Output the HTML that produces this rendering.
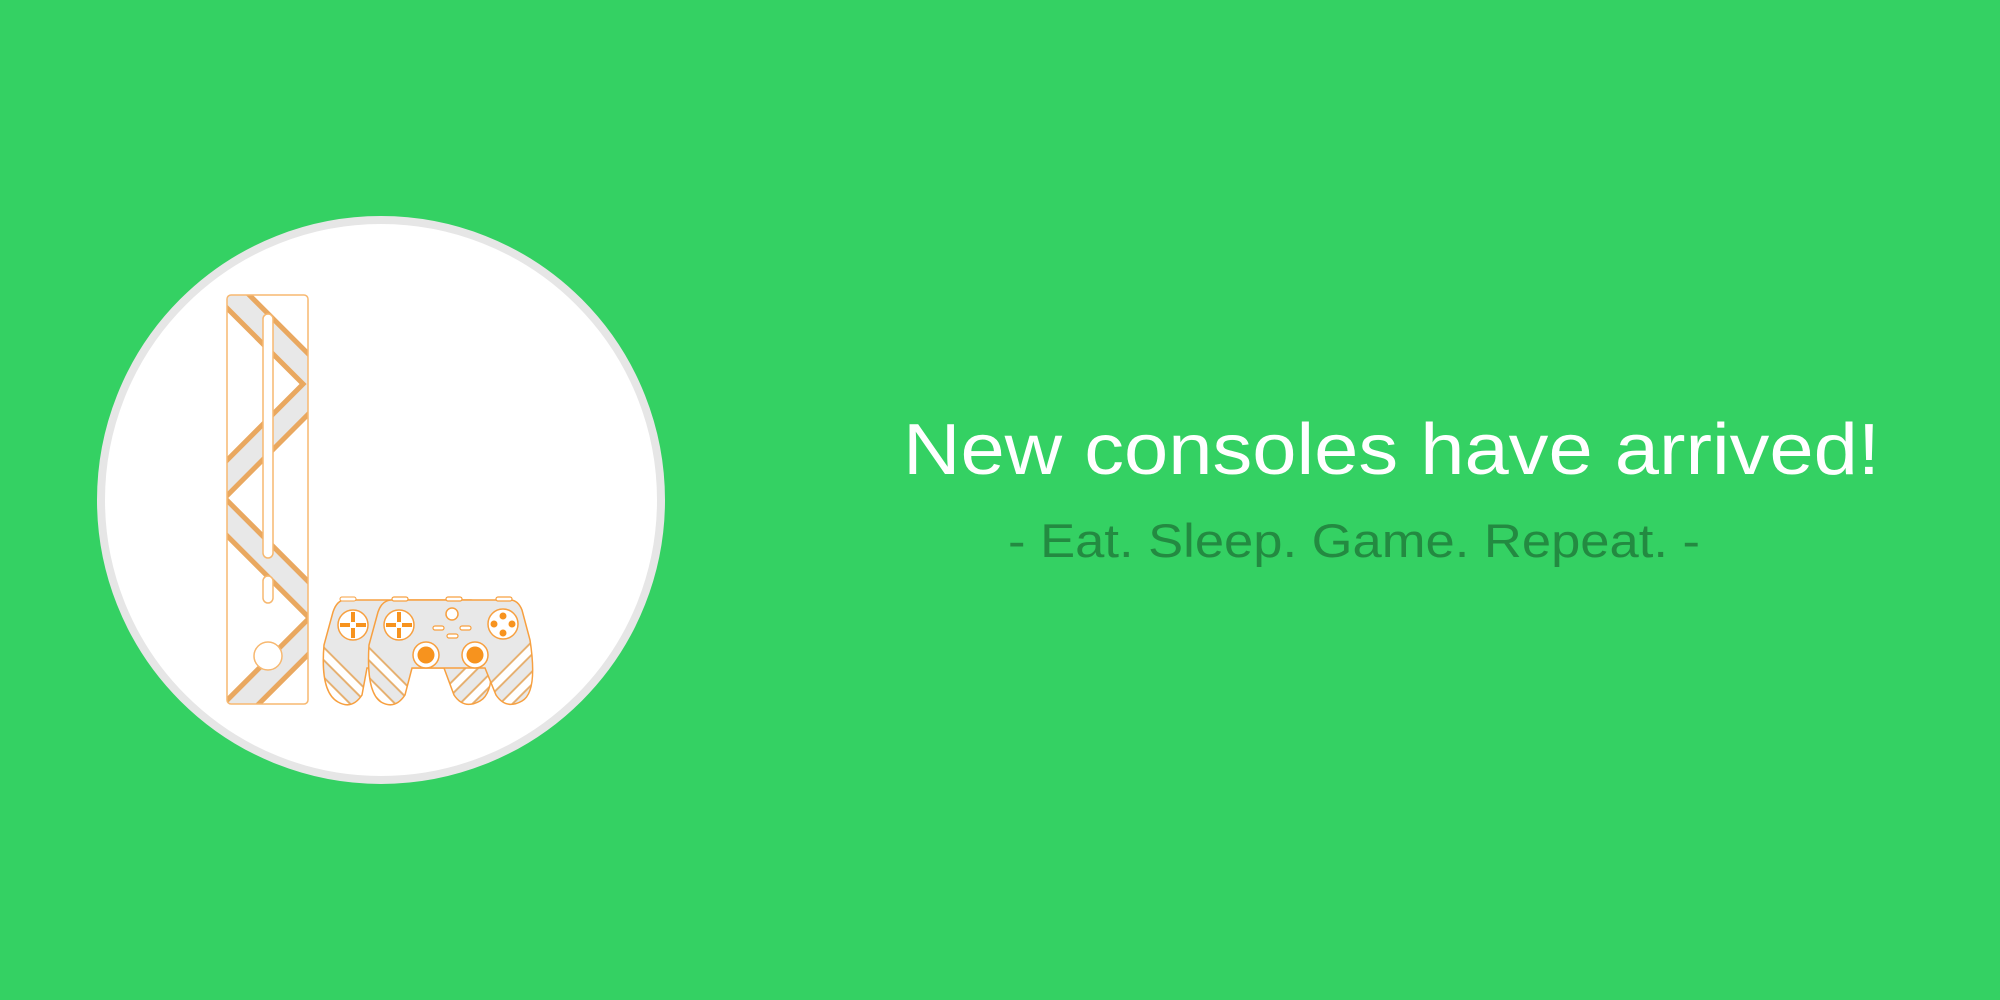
<!DOCTYPE html>
<html><head><meta charset="utf-8"><style>
html,body{margin:0;padding:0;background:#34d163;width:2000px;height:1000px;overflow:hidden}
svg{display:block}
</style></head><body>
<svg width="2000" height="1000" viewBox="0 0 2000 1000" xmlns="http://www.w3.org/2000/svg">
<rect width="2000" height="1000" fill="#34d163"/>
<circle cx="381" cy="500" r="280" fill="#fff" stroke="#e6e6e6" stroke-width="8"/>
<defs>
<clipPath id="cc"><rect x="227" y="295" width="81" height="409" rx="4"/></clipPath>
<path id="fp" d="M392 600 L510 600 Q518 600 522 610 L530 640 Q538 692 522 701 Q506 710 496 695 L485 668 L412 668 L405 695 Q395 710 381 702 Q366 692 369 645 L378 612 Q382 600 392 600 Z"/>
<path id="bp" d="M345 600 L470 600 Q478 600 482 610 L490 645 Q496 692 480 701 Q464 710 454 695 L444 668 L367 668 L362 695 Q352 710 338 702 Q320 692 324 645 L333 612 Q337 600 345 600 Z"/>
<clipPath id="fc"><use href="#fp"/></clipPath>
<clipPath id="bc"><use href="#bp"/></clipPath>
</defs>
<!-- console -->
<rect x="227" y="295" width="81" height="409" rx="4" fill="#fff"/>
<g clip-path="url(#cc)">
<polyline points="180,243.5 320.75,384 207,498 327,618 200,745" fill="none" stroke="#e9a860" stroke-width="30" stroke-linejoin="miter" stroke-miterlimit="10"/>
<polyline points="180,243.5 320.75,384 207,498 327,618 200,745" fill="none" stroke="#e8e8e8" stroke-width="20" stroke-linejoin="miter" stroke-miterlimit="10"/>
</g>
<rect x="227" y="295" width="81" height="409" rx="4" fill="none" stroke="#f7b870" stroke-width="1.5"/>
<rect x="263" y="314" width="10" height="244" rx="5" fill="#fff" stroke="#f7b870" stroke-width="1.5"/>
<rect x="263" y="576" width="10" height="27" rx="5" fill="#fff" stroke="#f7b870" stroke-width="1.5"/>
<circle cx="268" cy="656" r="14" fill="#fff" stroke="#f7b870" stroke-width="1.5"/>
<!-- back controller -->
<use href="#bp" fill="#e8e8e8"/>
<g clip-path="url(#bc)">
<g stroke="#e6b070" stroke-width="11"><line x1="300" y1="630" x2="400" y2="730"/><line x1="300" y1="660" x2="400" y2="760"/><line x1="520" y1="620" x2="420" y2="720"/><line x1="520" y1="650" x2="420" y2="750"/></g>
<g stroke="#fff" stroke-width="7"><line x1="300" y1="630" x2="400" y2="730"/><line x1="300" y1="660" x2="400" y2="760"/><line x1="520" y1="620" x2="420" y2="720"/><line x1="520" y1="650" x2="420" y2="750"/></g>
<rect x="320" y="598" width="180" height="40" fill="#e8e8e8"/>
</g>
<use href="#bp" fill="none" stroke="#f7a040" stroke-width="1.5"/>
<rect x="340" y="597" width="16" height="4" rx="2" fill="#fff" stroke="#f7a040"/>
<!-- front controller -->
<use href="#fp" fill="#e8e8e8"/>
<g clip-path="url(#fc)">
<g stroke="#e6b070" stroke-width="11"><line x1="345" y1="630" x2="445" y2="730"/><line x1="345" y1="660" x2="445" y2="760"/><line x1="560" y1="620" x2="460" y2="720"/><line x1="560" y1="650" x2="460" y2="750"/></g>
<g stroke="#fff" stroke-width="7"><line x1="345" y1="630" x2="445" y2="730"/><line x1="345" y1="660" x2="445" y2="760"/><line x1="560" y1="620" x2="460" y2="720"/><line x1="560" y1="650" x2="460" y2="750"/></g>
<rect x="360" y="598" width="180" height="40" fill="#e8e8e8"/>
<rect x="410" y="598" width="80" height="70" fill="#e8e8e8"/>
</g>
<use href="#fp" fill="none" stroke="#f7a040" stroke-width="1.5"/>
<g fill="#fff" stroke="#f7a040" stroke-width="1.2">
<rect x="392" y="597" width="16" height="4" rx="2"/><rect x="446" y="597" width="16" height="4" rx="2"/><rect x="496" y="597" width="16" height="4" rx="2"/>
</g>
<!-- dpads -->
<circle cx="353" cy="625" r="15" fill="#fff" stroke="#f7a040" stroke-width="1.5"/>
<rect x="351" y="612" width="4" height="26" fill="#f7931e"/><rect x="340" y="623" width="26" height="4" fill="#f7931e"/><rect x="350" y="622" width="6" height="6" fill="#fff"/>
<circle cx="399" cy="625" r="15" fill="#fff" stroke="#f7a040" stroke-width="1.5"/>
<rect x="397" y="612" width="4" height="26" fill="#f7931e"/><rect x="386" y="623" width="26" height="4" fill="#f7931e"/><rect x="396" y="622" width="6" height="6" fill="#fff"/>
<circle cx="503" cy="624" r="15" fill="#fff" stroke="#f7a040" stroke-width="1.5"/>
<circle cx="503" cy="616" r="3.5" fill="#f7931e"/><circle cx="503" cy="633" r="3.5" fill="#f7931e"/>
<circle cx="494" cy="624" r="3.5" fill="#f7931e"/><circle cx="512" cy="624" r="3.5" fill="#f7931e"/>
<circle cx="452" cy="614" r="6" fill="#fff" stroke="#f7a040" stroke-width="1.5"/>
<g fill="#fff" stroke="#f7a040" stroke-width="1.2">
<rect x="433" y="626" width="11" height="4" rx="2"/><rect x="460" y="626" width="11" height="4" rx="2"/><rect x="447" y="634" width="11" height="4" rx="2"/>
</g>
<circle cx="426" cy="655" r="13" fill="#fff" stroke="#f7a040" stroke-width="1.5"/>
<circle cx="426" cy="655" r="8.5" fill="#f7931e"/>
<circle cx="475" cy="655" r="13" fill="#fff" stroke="#f7a040" stroke-width="1.5"/>
<circle cx="475" cy="655" r="8.5" fill="#f7931e"/>
<!-- text -->
<text x="903" y="474" textLength="977" lengthAdjust="spacingAndGlyphs" font-family="Liberation Sans, sans-serif" font-size="72" fill="#fff">New consoles have arrived!</text>
<text x="1008" y="557" textLength="692" lengthAdjust="spacingAndGlyphs" font-family="Liberation Sans, sans-serif" font-size="47" fill="#238a41">- Eat. Sleep. Game. Repeat. -</text>
</svg>
</body></html>
